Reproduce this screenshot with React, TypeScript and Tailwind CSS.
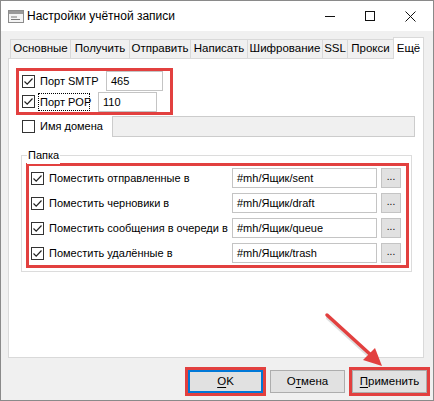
import type { ReactNode } from 'react';

const font = { fontFamily: '"Liberation Sans", Arial, sans-serif' };

const Check = ({ checked }: { checked: boolean }) => (
  <span className="flex h-[13px] w-[13px] shrink-0 items-center justify-center border border-[#333] bg-white">
    {checked && (
      <svg width="11" height="11" viewBox="0 0 11 11">
        <path d="M1.5 5.5 L4.2 8.2 L9.5 2.5" fill="none" stroke="#222" strokeWidth="1.2" />
      </svg>
    )}
  </span>
);

const Red = ({ className, children }: { className: string; children: ReactNode }) => (
  <div className={`border-[3px] border-[#e2403f] ${className}`}>{children}</div>
);

const tabs = [
  ['Основные', 60],
  ['Получить', 59],
  ['Отправить', 61],
  ['Написать', 57],
  ['Шифрование', 75],
  ['SSL', 25],
  ['Прокси', 46],
] as const;

const folders = [
  ['Поместить отправленные в', '#mh/Ящик/sent'],
  ['Поместить черновики в', '#mh/Ящик/draft'],
  ['Поместить сообщения в очереди в', '#mh/Ящик/queue'],
  ['Поместить удалённые в', '#mh/Ящик/trash'],
];

const Btn = ({ children, def }: { children: ReactNode; def?: boolean }) => (
  <button
    className={`flex h-[23px] w-[75px] items-center justify-center bg-[#e1e1e1] text-[11.5px] text-black ${
      def ? 'border-2 border-[#0078d7]' : 'border border-[#adadad]'
    }`}
  >
    {children}
  </button>
);

export default function App() {
  return (
    <div
      className="relative flex h-[401px] w-[434px] flex-col whitespace-nowrap border border-[#8a8a8a] text-[11px] text-black"
      style={font}
    >
      {/* title bar */}
      <div className="flex h-[30px] shrink-0 items-center bg-white text-[12px]">
        <svg className="ml-[7px]" width="16" height="14" viewBox="0 0 16 14">
          <rect x="0.5" y="1.5" width="15" height="12" fill="#f4f4f4" stroke="#8c8c8c" />
          <rect x="1" y="2" width="14" height="3" fill="#9a9a9a" />
          <path d="M3 8 H9 M3 10.5 H12" stroke="#7a7a7a" strokeWidth="1" />
        </svg>
        <span className="ml-[3px]">Настройки учётной записи</span>
        <div className="ml-auto mr-[3px] flex h-full">
          <div className="flex w-[40px] items-center justify-center">
            <div className="h-px w-[10px] bg-[#111]" />
          </div>
          <div className="flex w-[40px] items-center justify-center">
            <div className="h-[10px] w-[10px] border border-[#111]" />
          </div>
          <div className="flex w-[40px] items-center justify-center">
            <svg width="11" height="11" viewBox="0 0 11 11">
              <path d="M0.5 0.5 L10.5 10.5 M10.5 0.5 L0.5 10.5" stroke="#111" strokeWidth="1" />
            </svg>
          </div>
        </div>
      </div>

      {/* body */}
      <div className="flex flex-1 flex-col bg-[#f0f0f0] px-[7px] pt-[6px]">
        <div className="flex h-[21px] items-end pl-[2px] text-[11.5px]">
          {tabs.map(([t, w]) => (
            <div
              key={t}
              className="flex h-[19px] items-center justify-center border border-b-0 border-r-0 border-[#d9d9d9] bg-[#f0f0f0]"
              style={{ width: w }}
            >
              {t}
            </div>
          ))}
          <div className="relative z-10 -mb-px flex h-[22px] w-[31px] items-center justify-center border border-b-0 border-[#d9d9d9] bg-white">
            Ещё
          </div>
        </div>

        <div className="h-[300px] w-[416px] border border-[#d9d9d9] bg-white pt-[9px]">
          <Red className="ml-[7px] flex h-[47px] w-[157px] flex-col">
            <div className="flex h-[21px] items-center pl-[3px]">
              <Check checked />
              <span className="ml-[5px] w-[66px]">Порт SMTP</span>
              <div className="flex h-[20px] w-[57px] items-center border border-[#c4c4c4] pl-[4px]">465</div>
            </div>
            <div className="flex h-[21px] items-center pl-[3px]">
              <Check checked />
              <span className="ml-[3px] flex h-[18px] w-[52px] items-center border border-dotted border-black pl-[1px]">
                Порт POP
              </span>
              <div className="ml-[8px] flex h-[20px] w-[59px] items-center border border-[#c4c4c4] pl-[4px]">
                110
              </div>
            </div>
          </Red>

          <div className="mt-px flex h-[21px] items-center pl-[13px]">
            <Check checked={false} />
            <span className="ml-[5px] w-[72px]">Имя домена</span>
            <div className="h-[21px] w-[303px] border border-[#cccccc] bg-[#f0f0f0]" />
          </div>

          <div className="relative ml-[12px] mt-[18px] h-[117px] w-[391px] border border-[#dcdcdc] pt-[7px]">
            <span className="absolute left-[5px] top-[-9px] bg-white px-[1px]">Папка</span>
            <Red className="ml-[4px] flex h-[105px] w-[383px] flex-col gap-[5px] pt-[2px]">
              {folders.map(([label, path]) => (
                <div key={label} className="flex h-[20px] items-center pl-[2px] pr-[5px]">
                  <Check checked />
                  <span className="ml-[5px] flex-1">{label}</span>
                  <div className="flex h-[20px] w-[145px] items-center border border-[#c4c4c4] pl-[4px]">
                    {path}
                  </div>
                  <div className="ml-[4px] flex h-[20px] w-[20px] items-center justify-center border border-[#c4c4c4] bg-[#e1e1e1] pb-[3px] text-[10px]">
                    ...
                  </div>
                </div>
              ))}
            </Red>
          </div>
        </div>

        <div className="mt-[9px] mr-[-4px] flex items-center justify-end gap-[4px]">
          <Red className="">
            <Btn def>
              <span className="underline underline-offset-2">O</span>
              <span>K</span>
            </Btn>
          </Red>
          <Btn>
            О<span className="underline underline-offset-2">т</span>мена
          </Btn>
          <Red className="">
            <Btn>
              <span className="underline underline-offset-2">П</span>рименить
            </Btn>
          </Red>
        </div>
      </div>

      {/* annotation arrow */}
      <svg className="pointer-events-none absolute left-0 top-0" width="434" height="401">
        <path d="M326 315 L372 357" stroke="#b0b0b0" strokeWidth="4" strokeLinecap="round" opacity="0.4" transform="translate(1,2)" />
        <path d="M326 314 L371 355" stroke="#e2403f" strokeWidth="3.5" strokeLinecap="round" />
        <path d="M381 365 L362 359 L374 347 Z" fill="#e2403f" />
      </svg>
    </div>
  );
}
